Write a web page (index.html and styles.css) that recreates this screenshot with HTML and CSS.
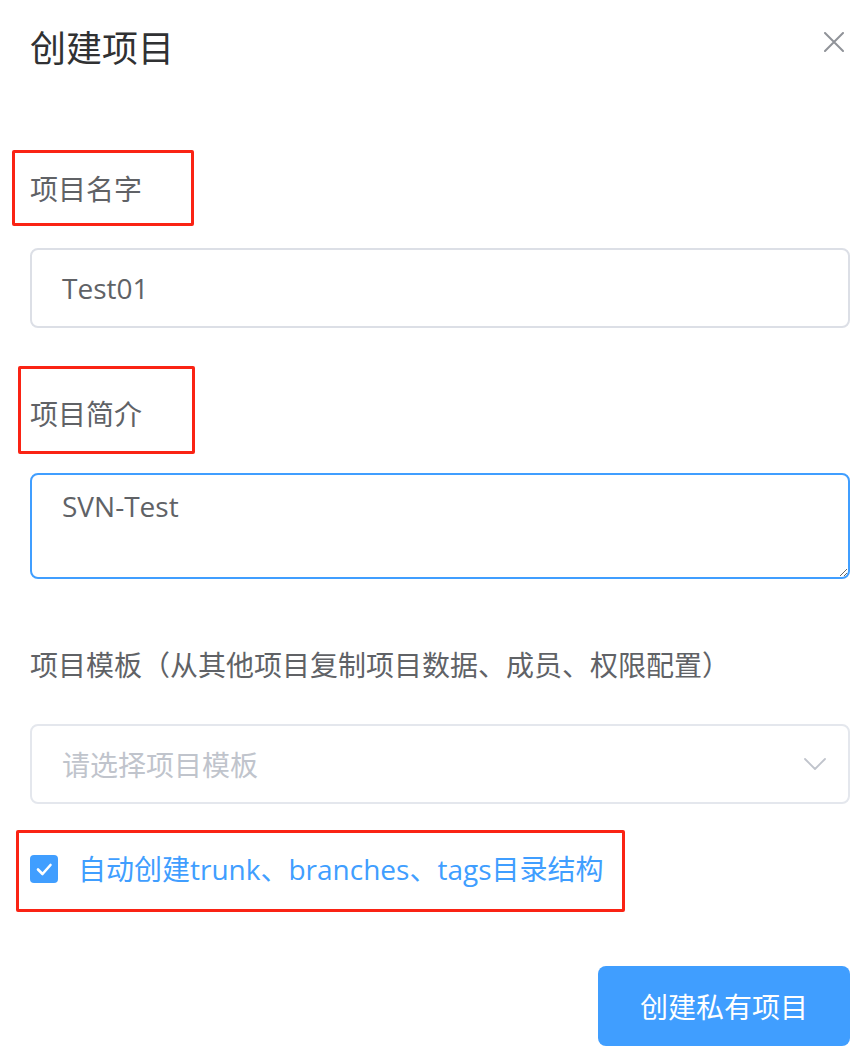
FILE: index.html
```html
<!DOCTYPE html>
<html lang="zh-CN">
<head>
<meta charset="utf-8">
<title>创建项目</title>
<link rel="stylesheet" href="styles.css">
</head>
<body>
<div class="dialog">
  <div class="dialog-header">
    <h2 class="dialog-title">创建项目</h2>
    <button class="close-btn" aria-label="关闭">
      <svg width="20" height="20" viewBox="0 0 20 20"><path d="M1 1 L19 19 M19 1 L1 19" stroke="#909399" stroke-width="2" fill="none" stroke-linecap="round"/></svg>
    </button>
  </div>

  <form class="form">
    <div class="field">
      <label class="field-label">项目名字</label>
      <div class="input">Test01</div>
    </div>

    <div class="field field-gap">
      <label class="field-label">项目简介</label>
      <textarea class="textarea">SVN-Test</textarea>
    </div>

    <div class="field field-gap">
      <label class="field-label">项目模板（从其他项目复制项目数据、成员、权限配置）</label>
      <div class="select">
        <span class="placeholder">请选择项目模板</span>
        <svg class="chevron" width="22" height="12" viewBox="0 0 22 12"><path d="M1 1 L11 11 L21 1" stroke="#c0c4cc" stroke-width="1.8" fill="none" stroke-linecap="round" stroke-linejoin="round"/></svg>
      </div>
    </div>

    <div class="checkbox-row">
      <span class="checkbox">
        <svg width="28" height="28" viewBox="0 0 28 28"><path d="M8 14.5 L12.5 19 L20.5 10" stroke="#fff" stroke-width="2.6" fill="none" stroke-linecap="round" stroke-linejoin="round"/></svg>
      </span>
      <span class="checkbox-label">自动创建trunk、branches、tags目录结构</span>
    </div>

    <div class="footer">
      <button type="button" class="primary-btn">创建私有项目</button>
    </div>
  </form>

  <div class="mark mark-1"></div>
  <div class="mark mark-2"></div>
  <div class="mark mark-3"></div>
</div>
</body>
</html>
```

FILE: styles.css
```css
html, body {
  margin: 0;
  padding: 0;
  background: #ffffff;
}

body {
  font-family: "Open Sans", "Noto Sans CJK SC", sans-serif;
  color: #606266;
}

.dialog {
  position: relative;
  padding: 22px 16px 12px 30px;
}

.dialog-header {
  display: flex;
  justify-content: space-between;
  align-items: flex-start;
  height: 48px;
}

.dialog-title {
  margin: 0;
  font-size: 36px;
  line-height: 48px;
  font-weight: 400;
  color: #303133;
  font-family: "Noto Sans CJK SC", sans-serif;
}

.close-btn {
  margin: 10px 6px 0 0;
  padding: 0;
  border: 0;
  background: transparent;
  width: 20px;
  height: 20px;
  display: flex;
}

.form {
  display: flex;
  flex-direction: column;
  margin-top: 90px;
}

.field {
  display: flex;
  flex-direction: column;
}

.field-gap {
  margin-top: 57px;
}

.field-label {
  font-size: 28px;
  line-height: 56px;
  height: 56px;
  margin-bottom: 32px;
  color: #606266;
  font-family: "Noto Sans CJK SC", sans-serif;
  white-space: nowrap;
}

.input {
  box-sizing: border-box;
  height: 80px;
  border: 2px solid #dcdfe6;
  border-radius: 8px;
  padding: 0 30px;
  font-size: 28px;
  line-height: 76px;
  color: #606266;
}

.textarea {
  box-sizing: border-box;
  display: block;
  width: 100%;
  height: 106px;
  margin: 0;
  border: 2px solid #409eff;
  border-radius: 8px;
  padding: 10px 30px;
  font-family: "Open Sans", "Noto Sans CJK SC", sans-serif;
  font-size: 28px;
  line-height: 42px;
  color: #606266;
  outline: none;
  resize: vertical;
}

.select {
  box-sizing: border-box;
  height: 80px;
  border: 2px solid #e4e7ed;
  border-radius: 8px;
  padding: 0 22px 0 30px;
  display: flex;
  align-items: center;
  justify-content: space-between;
}

.placeholder {
  font-size: 28px;
  color: #c0c4cc;
  font-family: "Noto Sans CJK SC", sans-serif;
}

.chevron {
  display: block;
}

.checkbox-row {
  display: flex;
  align-items: center;
  height: 40px;
  margin-top: 45px;
}

.checkbox {
  width: 28px;
  height: 28px;
  border-radius: 4px;
  background: #409eff;
  display: flex;
}

.checkbox-label {
  margin-left: 20px;
  font-size: 28px;
  line-height: 40px;
  color: #409eff;
  white-space: nowrap;
}

.footer {
  display: flex;
  justify-content: flex-end;
  margin-top: 77px;
}

.primary-btn {
  height: 80px;
  padding: 0 42px;
  border: 0;
  border-radius: 8px;
  background: #409eff;
  color: #ffffff;
  font-family: "Noto Sans CJK SC", sans-serif;
  font-size: 28px;
  line-height: 80px;
}

.mark {
  position: absolute;
  box-sizing: border-box;
  border: 3px solid #fa2314;
  border-radius: 2px;
  pointer-events: none;
}

.mark-1 {
  left: 12px;
  top: 150px;
  width: 182px;
  height: 76px;
}

.mark-2 {
  left: 18px;
  top: 366px;
  width: 177px;
  height: 88px;
}

.mark-3 {
  left: 16px;
  top: 830px;
  width: 609px;
  height: 82px;
}
```
